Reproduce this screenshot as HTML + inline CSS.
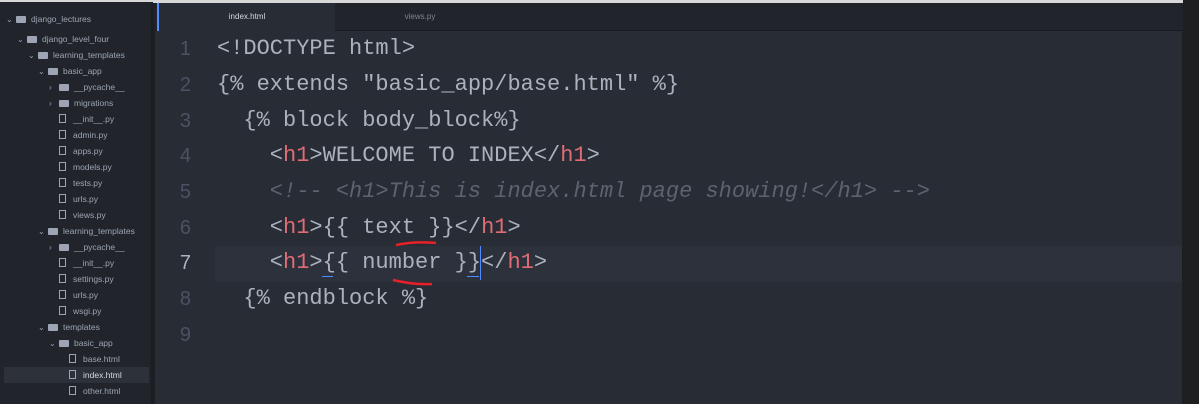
<!DOCTYPE html>
<html><head><style>
*{margin:0;padding:0;box-sizing:border-box}
body{width:1199px;height:404px;overflow:hidden;background:#1e1f21;position:relative;font-family:"Liberation Sans",sans-serif}
#top{position:absolute;left:0;top:0;width:1183px;height:3px;background:#d8d8d8}
#side{position:absolute;left:0;top:2px;width:153px;height:402px;background:#21252b;border-right:2px solid #1a1d22}
.r{position:absolute;height:16px;line-height:16px;font-size:8.5px;color:#9da5b4;white-space:nowrap}
.r.sel{background:#2c313a;color:#d7dae0;left:4px!important;width:145px}
.ar{display:inline-block;width:10px;font-size:8px;color:#9da5b4}
.fo{display:inline-block;width:10px;height:7px;background:#9da5b4;margin-right:5px;vertical-align:-1px;border-radius:1px}
.fi{display:inline-block;width:7px;height:9px;border:1px solid #9da5b4;margin-right:7px;vertical-align:-1px}
#tabs{position:absolute;left:155px;top:3px;width:1028px;height:28px;background:#21252b;border-bottom:1px solid #181a1f}
.tab{position:absolute;top:0;height:28px;line-height:28px;text-align:center;font-size:8px;color:#7d8491}
#ed{position:absolute;left:155px;top:31px;width:1027px;height:373px;background:#282c34}
.cl{position:absolute;left:215px;top:246px;width:967px;height:36px;background:#2c313c}
.ln{position:absolute;left:155px;width:36px;text-align:right;font:20px "Liberation Sans",sans-serif;color:#4b5263}
.code{position:absolute;left:217px;font:22px "Liberation Mono",monospace;color:#abb2bf;white-space:pre}
.t{color:#e06c75}.c{color:#5c6370;font-style:italic}
</style></head><body>
<div id="top"></div>
<div id="side">
<div class="r" style="left:6px;top:9px"><span class="ar">⌄</span><span class="fo"></span>django_lectures</div>
<div class="r" style="left:17px;top:29px"><span class="ar">⌄</span><span class="fo"></span>django_level_four</div>
<div class="r" style="left:28px;top:45px"><span class="ar">⌄</span><span class="fo"></span>learning_templates</div>
<div class="r" style="left:38px;top:61px"><span class="ar">⌄</span><span class="fo"></span>basic_app</div>
<div class="r" style="left:49px;top:77px"><span class="ar">›</span><span class="fo"></span>__pycache__</div>
<div class="r" style="left:49px;top:93px"><span class="ar">›</span><span class="fo"></span>migrations</div>
<div class="r" style="left:59px;top:109px"><span class="fi"></span>__init__.py</div>
<div class="r" style="left:59px;top:125px"><span class="fi"></span>admin.py</div>
<div class="r" style="left:59px;top:141px"><span class="fi"></span>apps.py</div>
<div class="r" style="left:59px;top:157px"><span class="fi"></span>models.py</div>
<div class="r" style="left:59px;top:173px"><span class="fi"></span>tests.py</div>
<div class="r" style="left:59px;top:189px"><span class="fi"></span>urls.py</div>
<div class="r" style="left:59px;top:205px"><span class="fi"></span>views.py</div>
<div class="r" style="left:38px;top:221px"><span class="ar">⌄</span><span class="fo"></span>learning_templates</div>
<div class="r" style="left:49px;top:237px"><span class="ar">›</span><span class="fo"></span>__pycache__</div>
<div class="r" style="left:59px;top:253px"><span class="fi"></span>__init__.py</div>
<div class="r" style="left:59px;top:269px"><span class="fi"></span>settings.py</div>
<div class="r" style="left:59px;top:285px"><span class="fi"></span>urls.py</div>
<div class="r" style="left:59px;top:301px"><span class="fi"></span>wsgi.py</div>
<div class="r" style="left:38px;top:317px"><span class="ar">⌄</span><span class="fo"></span>templates</div>
<div class="r" style="left:49px;top:333px"><span class="ar">⌄</span><span class="fo"></span>basic_app</div>
<div class="r" style="left:69px;top:349px"><span class="fi"></span>base.html</div>
<div class="r sel" style="top:365px"><span style="margin-left:65px" class="fi"></span>index.html</div>
<div class="r" style="left:69px;top:381px"><span class="fi"></span>other.html</div>
</div>
<div id="tabs">
<div class="tab" style="left:2px;width:178px;background:#282c34;color:#d7dae0;border-left:2px solid #528bff">index.html</div>
<div class="tab" style="left:180px;width:170px">views.py</div>
</div>
<div id="ed"></div>
<div class="cl"></div>
<div class="ln" style="top:38px">1</div>
<div class="ln" style="top:74px">2</div>
<div class="ln" style="top:110px">3</div>
<div class="ln" style="top:145px">4</div>
<div class="ln" style="top:181px">5</div>
<div class="ln" style="top:217px">6</div>
<div class="ln" style="top:252px;color:#abb2bf">7</div>
<div class="ln" style="top:288px">8</div>
<div class="ln" style="top:324px">9</div>
<div class="code" style="top:36px">&lt;!DOCTYPE html&gt;</div>
<div class="code" style="top:72px">{% extends "basic_app/base.html" %}</div>
<div class="code" style="top:108px">  {% block body_block%}</div>
<div class="code" style="top:143px">    &lt;<span class="t">h1</span>&gt;WELCOME TO INDEX&lt;/<span class="t">h1</span>&gt;</div>
<div class="code c" style="top:179px">    &lt;!-- &lt;h1&gt;This is index.html page showing!&lt;/h1&gt; --&gt;</div>
<div class="code" style="top:215px">    &lt;<span class="t">h1</span>&gt;{{ text }}&lt;/<span class="t">h1</span>&gt;</div>
<div class="code" style="top:250px">    &lt;<span class="t">h1</span>&gt;{{ number }}&lt;/<span class="t">h1</span>&gt;</div>
<div class="code" style="top:286px">  {% endblock %}</div>
<div style="position:absolute;left:322px;top:276px;width:11px;height:1px;background:#528bff"></div>
<div style="position:absolute;left:467px;top:276px;width:12px;height:1px;background:#528bff"></div>
<div style="position:absolute;left:480px;top:246px;width:1px;height:34px;background:#528bff"></div>
<svg style="position:absolute;left:0;top:0" width="1199" height="404"><path d="M396 245 Q415 241 436 243" stroke="#e8202a" stroke-width="2.5" fill="none"/><path d="M393 280 Q414 285 432 284" stroke="#e8202a" stroke-width="2.5" fill="none"/></svg>
</body></html>
